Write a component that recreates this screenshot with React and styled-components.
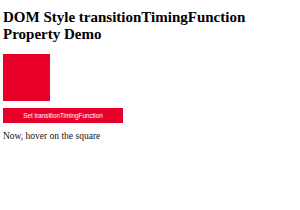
import styled, { createGlobalStyle } from 'styled-components';

const Global = createGlobalStyle`
	body {
		margin: 0;
		padding: 3px;
		font-family: 'Liberation Serif', serif;
		background: #fff;
		color: #000;
	}
`;

const Title = styled.h1`
	margin: 6px 0 0;
	font-size: 15px;
	line-height: 17px;
	font-weight: bold;
`;

const Square = styled.div`
	width: 47px;
	height: 47px;
	margin-top: 11px;
	background: #e8002b;
`;

const Button = styled.button`
	display: block;
	width: 120px;
	height: 15px;
	margin-top: 7px;
	padding: 0;
	border: none;
	background: #e8002b;
	color: #fff;
	font-family: 'Liberation Sans', sans-serif;
	font-size: 6.3px;
	cursor: pointer;
`;

const Note = styled.p`
	margin: 7px 0 0;
	font-size: 9.5px;
	line-height: 12px;
	color: #111;
`;

export default function App() {
	return (
		<>
			<Global />
			<Title>DOM Style transitionTimingFunction Property Demo</Title>
			<Square />
			<Button>Set transitionTimingFunction</Button>
			<Note>Now, hover on the square</Note>
		</>
	);
}
